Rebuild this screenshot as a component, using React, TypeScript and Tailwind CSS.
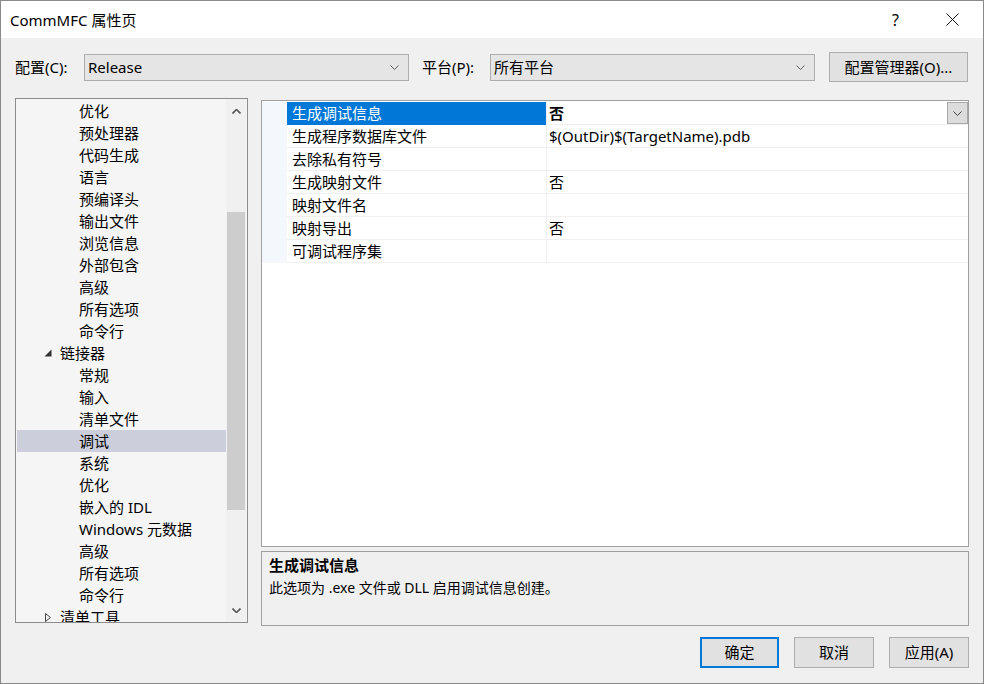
import React from 'react'

const treeItems: { label: string; level: 1 | 2; kind?: 'open' | 'closed'; selected?: boolean }[] = [
  { label: '优化', level: 2 },
  { label: '预处理器', level: 2 },
  { label: '代码生成', level: 2 },
  { label: '语言', level: 2 },
  { label: '预编译头', level: 2 },
  { label: '输出文件', level: 2 },
  { label: '浏览信息', level: 2 },
  { label: '外部包含', level: 2 },
  { label: '高级', level: 2 },
  { label: '所有选项', level: 2 },
  { label: '命令行', level: 2 },
  { label: '链接器', level: 1, kind: 'open' },
  { label: '常规', level: 2 },
  { label: '输入', level: 2 },
  { label: '清单文件', level: 2 },
  { label: '调试', level: 2, selected: true },
  { label: '系统', level: 2 },
  { label: '优化', level: 2 },
  { label: '嵌入的 IDL', level: 2 },
  { label: 'Windows 元数据', level: 2 },
  { label: '高级', level: 2 },
  { label: '所有选项', level: 2 },
  { label: '命令行', level: 2 },
  { label: '清单工具', level: 1, kind: 'closed' },
]

const props: { name: string; value: string }[] = [
  { name: '生成调试信息', value: '否' },
  { name: '生成程序数据库文件', value: '$(OutDir)$(TargetName).pdb' },
  { name: '去除私有符号', value: '' },
  { name: '生成映射文件', value: '否' },
  { name: '映射文件名', value: '' },
  { name: '映射导出', value: '否' },
  { name: '可调试程序集', value: '' },
]

function Chevron({ up = false, className = '', sw = 1 }: { up?: boolean; className?: string; sw?: number }) {
  return (
    <svg width="9" height="5" viewBox="0 0 9 5" className={className}>
      <polyline
        points={up ? '0.5,4.5 4.5,0.5 8.5,4.5' : '0.5,0.5 4.5,4.5 8.5,0.5'}
        fill="none"
        stroke="currentColor"
        strokeWidth={sw}
      />
    </svg>
  )
}

function Combo({ text }: { text: string }) {
  return (
    <div className="w-[325px] h-[27px] flex items-center justify-between bg-[#e5e5e5] border border-[#adadad] pl-[3px] pr-[9px]">
      <span className="leading-[20px]">{text}</span>
      <Chevron className="text-[#606060]" />
    </div>
  )
}

function Button({ children, primary = false, w }: { children: React.ReactNode; primary?: boolean; w: string }) {
  return (
    <div
      className={`${w} h-[31px] flex items-center justify-center bg-[#e1e1e1] border ${
        primary ? 'border-2 border-[#0078d7]' : 'border-[#adadad]'
      }`}
    >
      {children}
    </div>
  )
}

export default function App() {
  return (
    <div className="w-[984px] h-[684px] border border-[#8a8a8a] flex flex-col bg-[#f0f0f0] text-[15px] text-black font-['Noto_Sans','Noto_Sans_CJK_SC',sans-serif] overflow-hidden">
      {/* title bar */}
      <div className="h-[37px] bg-white flex items-center pl-[9px] shrink-0">
        <span className="leading-[20px]">CommMFC 属性页</span>
        <div className="ml-auto flex items-center">
          <span className="text-[16px] leading-[20px] mr-[47px]">?</span>
          <svg width="13" height="13" viewBox="0 0 13 13" className="mr-[24px]">
            <path d="M0.5 0.5 L12.5 12.5 M12.5 0.5 L0.5 12.5" stroke="#111" strokeWidth="1" />
          </svg>
        </div>
      </div>

      {/* config row */}
      <div className="mt-[14px] h-[30px] flex items-center pl-[14px] shrink-0">
        <span className="w-[69px] leading-[20px]">配置(C):</span>
        <Combo text="Release" />
        <span className="ml-[13px] w-[68px] leading-[20px]">平台(P):</span>
        <Combo text="所有平台" />
        <div className="ml-[14px] w-[139px] h-[30px] flex items-center justify-center bg-[#e1e1e1] border border-[#adadad]">
          配置管理器(O)...
        </div>
      </div>

      {/* main area */}
      <div className="mt-[16px] flex pl-[14px] shrink-0">
        {/* tree */}
        <div className="w-[233px] h-[525px] border border-[#8c8c8c] bg-[#f5f5f5] flex pr-[1px]">
          <div className="flex-1 overflow-hidden pl-[1px] pt-[1px]">
            {treeItems.map((it, i) => (
              <div
                key={i}
                className={`h-[22px] flex items-center leading-[22px] whitespace-nowrap ${
                  it.selected ? 'bg-[#cccedb]' : ''
                } ${it.level === 2 ? 'pl-[62px]' : 'pl-[27px]'}`}
              >
                {it.kind === 'open' && (
                  <svg width="8" height="8" viewBox="0 0 8 8" className="mr-[8px]">
                    <polygon points="7.5,0.5 7.5,7.5 0.5,7.5" fill="#333" />
                  </svg>
                )}
                {it.kind === 'closed' && (
                  <svg width="8" height="9" viewBox="0 0 8 9" className="mr-[8px]">
                    <polygon points="1.5,0.5 6.5,4.5 1.5,8.5" fill="none" stroke="#444" strokeWidth="1" />
                  </svg>
                )}
                <span>{it.label}</span>
              </div>
            ))}
          </div>
          {/* scrollbar */}
          <div className="w-[20px] bg-[#f0f0f0] flex flex-col items-center">
            <div className="h-[18px] w-full flex items-center justify-center shrink-0 mt-[3px]">
              <Chevron up sw={1.6} className="text-[#555]" />
            </div>
            <div className="mt-[92px] w-[18px] h-[298px] bg-[#cdcdcd]" />
            <div className="mt-auto h-[18px] w-full flex items-center justify-center mb-[3px]">
              <Chevron sw={1.6} className="text-[#555]" />
            </div>
          </div>
        </div>

        {/* right column */}
        <div className="ml-[13px] w-[708px] flex flex-col mt-[2px]">
          <div className="h-[447px] border border-[#a0a0a0] bg-white pt-[1px]">
            {props.map((p, i) => (
              <div key={i} className="flex h-[23px]">
                <div className="w-[25px] bg-[#f4f7fb]" />
                <div
                  className={`w-[259px] border-b pl-[5px] leading-[22px] ${
                    i === 0 ? 'bg-[#0078d7] text-white border-[#0078d7]' : 'border-[#f0f0f0]'
                  }`}
                >
                  {p.name}
                </div>
                <div className="flex-1 border-l border-b border-[#f0f0f0] pl-[2px] flex items-start justify-between">
                  <span className={`leading-[22px] ${i === 0 ? 'font-bold' : ''}`}>{p.value}</span>
                  {i === 0 && (
                    <div className="w-[21px] h-[22px] bg-[#dcdcdc] border border-[#a8a8a8] flex items-center justify-center">
                      <Chevron className="text-[#444]" />
                    </div>
                  )}
                </div>
              </div>
            ))}
          </div>
          <div className="mt-[4px] h-[75px] border border-[#a0a0a0] bg-[#f0f0f0] pl-[7px] pt-[3px]">
            <div className="font-bold leading-[20px]">生成调试信息</div>
            <div className="mt-[3px] leading-[20px] text-[14px]">此选项为 .exe 文件或 DLL 启用调试信息创建。</div>
          </div>
        </div>
      </div>

      {/* buttons */}
      <div className="mt-[11px] flex justify-end gap-[15px] pr-[14px]">
        <Button primary w="w-[79px]">确定</Button>
        <Button w="w-[80px]">取消</Button>
        <Button w="w-[80px]">应用(A)</Button>
      </div>
    </div>
  )
}
